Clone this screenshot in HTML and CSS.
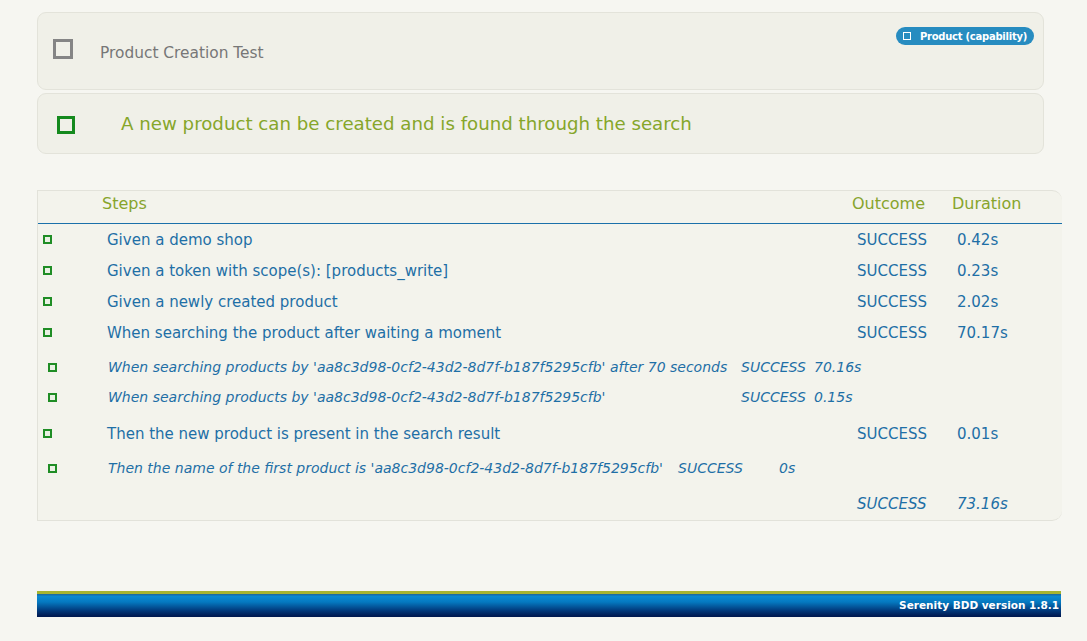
FILE: index.html
```html
<!DOCTYPE html>
<html>
<head>
<meta charset="utf-8">
<link rel="stylesheet" href="styles.css">
</head>
<body>
<div class="page">
  <div class="card card-story">
    <span class="chk chk-grey"></span>
    <span class="story-title">Product Creation Test</span>
    <span class="badge"><span class="badge-box"></span>Product (capability)</span>
  </div>
  <div class="card card-scenario">
    <span class="chk chk-green"></span>
    <span class="scenario-title">A new product can be created and is found through the search</span>
  </div>

  <div class="steps">
    <div class="row head">
      <div></div><div class="hc">Steps</div><div class="hc">Outcome</div><div class="hc">Duration</div>
    </div>
    <div class="row step">
      <div class="ic"><span class="box"></span></div><div class="c">Given a demo shop</div><div class="c">SUCCESS</div><div class="c">0.42s</div>
    </div>
    <div class="row step">
      <div class="ic"><span class="box"></span></div><div class="c">Given a token with scope(s): [products_write]</div><div class="c">SUCCESS</div><div class="c">0.23s</div>
    </div>
    <div class="row step">
      <div class="ic"><span class="box"></span></div><div class="c">Given a newly created product</div><div class="c">SUCCESS</div><div class="c">2.02s</div>
    </div>
    <div class="row step">
      <div class="ic"><span class="box"></span></div><div class="c">When searching the product after waiting a moment</div><div class="c">SUCCESS</div><div class="c">70.17s</div>
    </div>
    <div class="sub sub-a">
      <div class="sic"><span class="box"></span></div><div class="sc">When searching products by 'aa8c3d98-0cf2-43d2-8d7f-b187f5295cfb' after 70 seconds</div><div class="sc">SUCCESS</div><div class="sc">70.16s</div>
      <div class="sic"><span class="box"></span></div><div class="sc">When searching products by 'aa8c3d98-0cf2-43d2-8d7f-b187f5295cfb'</div><div class="sc">SUCCESS</div><div class="sc">0.15s</div>
    </div>
    <div class="row step">
      <div class="ic"><span class="box"></span></div><div class="c">Then the new product is present in the search result</div><div class="c">SUCCESS</div><div class="c">0.01s</div>
    </div>
    <div class="sub sub-b">
      <div class="sic"><span class="box"></span></div><div class="sc">Then the name of the first product is 'aa8c3d98-0cf2-43d2-8d7f-b187f5295cfb'</div><div class="sc">SUCCESS</div><div class="sc">0s</div>
    </div>
    <div class="row total">
      <div></div><div></div><div class="c">SUCCESS</div><div class="c">73.16s</div>
    </div>
  </div>

  <div class="footer">
    <div class="footer-bar">Serenity BDD version 1.8.1</div>
  </div>
</div>
</body>
</html>
```

FILE: styles.css
```css
html, body {
  margin: 0;
  padding: 0;
  background: #f6f6f1;
  font-family: "DejaVu Sans", Verdana, sans-serif;
}

.page {
  padding: 12px 0 0 37px;
}

.card {
  position: relative;
  box-sizing: border-box;
  width: 1007px;
  background: #f0f0e8;
  border: 1px solid #e3e3da;
  border-radius: 9px;
  display: flex;
  align-items: center;
}

.card-story {
  height: 78px;
  padding-left: 15px;
}

.card-scenario {
  height: 61px;
  margin-top: 3px;
  padding-left: 19px;
}

.chk {
  display: block;
  box-sizing: border-box;
  flex: none;
}

.chk-grey {
  width: 20px;
  height: 20px;
  border: 3px solid #858585;
  margin-top: -5px;
}

.chk-green {
  width: 18px;
  height: 18px;
  border: 3px solid #158a1e;
  margin-top: 2px;
}

.story-title {
  margin-left: 27px;
  font-size: 15.4px;
  color: #777777;
  margin-top: 4px;
}

.scenario-title {
  margin-left: 46px;
  font-size: 18.2px;
  color: #86a62a;
}

.badge {
  position: absolute;
  right: 9px;
  top: 14px;
  height: 18px;
  box-sizing: border-box;
  padding: 0 7px 0 7px;
  border-radius: 9px;
  background: #278cc0;
  color: #ffffff;
  font-size: 10px;
  letter-spacing: -0.25px;
  font-weight: bold;
  display: flex;
  align-items: center;
}

.badge-box {
  width: 8px;
  height: 8px;
  box-sizing: border-box;
  border: 1px solid #ffffff;
  margin-right: 9px;
}

.steps {
  margin-top: 36px;
  width: 1025px;
  box-sizing: border-box;
  background: #f3f3ec;
  border-left: 1px solid #e2e2da;
  border-top: 1px solid #e2e2da;
  border-bottom: 1px solid #e2e2da;
  border-radius: 0 10px 10px 0;
}

.row {
  display: grid;
  grid-template-columns: 59px 750px 100px 1fr;
  align-items: center;
}

.head {
  box-sizing: border-box;
  height: 33px;
  border-bottom: 1px solid #1a70aa;
}

.hc {
  padding-left: 5px;
  font-size: 16px;
  color: #87a42c;
  margin-top: -7px;
}

.step {
  height: 31px;
}

.ic {
  padding-left: 5px;
  display: flex;
  align-items: center;
}

.box {
  display: block;
  width: 9px;
  height: 9px;
  box-sizing: border-box;
  border: 2px solid #1f8d25;
  background: #eaf1e4;
}

.c {
  padding-left: 10px;
  font-size: 15px;
  color: #1e6fa6;
  white-space: nowrap;
}

.sub {
  display: grid;
  align-items: center;
  grid-auto-rows: 30px;
}

.sub-a {
  grid-template-columns: 70px 633px 73px 1fr;
  padding: 4px 0 6px 0;
}

.sub-b {
  grid-template-columns: 70px 570px 101px 1fr;
  padding: 4px 0 5px 0;
}

.sic {
  padding-left: 10px;
  display: flex;
  align-items: center;
}

.sc {
  font-size: 14px;
  font-style: italic;
  color: #1e6fa6;
  white-space: nowrap;
}

.total {
  height: 32px;
}

.total .c {
  font-style: italic;
}

.footer {
  margin-top: 70px;
  width: 1024px;
}

.footer-bar {
  height: 26px;
  box-sizing: border-box;
  border-top: 3px solid #a6b432;
  background: linear-gradient(to bottom, #1a6ca4 0px, #1a6ca4 1px, #0a8ad4 2px, #0579c0 8px, #023d80 16px, #001a52 22px, #001a52 23px);
  color: #ffffff;
  font-size: 10.5px;
  font-weight: bold;
  text-align: right;
  padding-right: 2px;
  line-height: 23px;
}
```
